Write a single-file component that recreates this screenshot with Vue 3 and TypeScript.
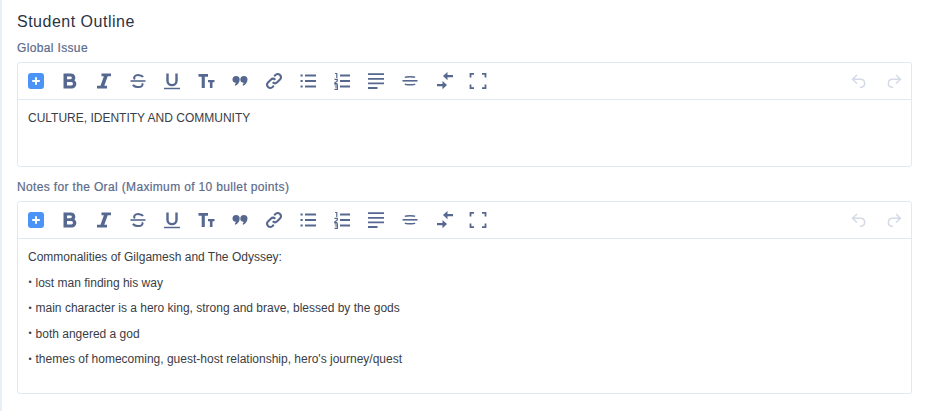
<script setup lang="ts">
interface Shape { d: string; sw?: number; fill?: boolean }
const main: Shape[][] = [
  [{ d: 'M3.500 2.500H11a4.300 4.300 0 0 1 3.500 6.900A4.500 4.500 0 0 1 12 17.500H3.500zM7 5.400v2.900h3.400a1.450 1.450 0 0 0 0-2.900zM7 11v3.600h4.200a1.800 1.800 0 0 0 0-3.600z', fill: true }],
  [{ d: 'M7.500 2.500h9.500v2.800h-3.300L10.300 14.700H13v2.800H3v-2.800h3.500L9.900 5.300H7.500z', fill: true }],
  [{ d: 'M15 6.200C14 3.900 8.500 3.300 6.700 5.300 5.700 6.500 6.200 7.600 7 8.300M5 13.800c1.200 2.500 7.200 3.100 9 1 .7-.8.700-1.800.2-2.600', sw: 2 }, { d: 'M2.500 10h15', sw: 1.600 }],
  [{ d: 'M5.500 2.500V10c0 5.500 9 5.500 9 0V2.500', sw: 2.400 }, { d: 'M2 17.500h16', sw: 1.500 }],
  [{ d: 'M2.500 3h9.500v2.800H8.800V17H5.700V5.800H2.500zM12 9h6.500v2.300h-2V17h-2.600v-5.700H12z', fill: true }],
  [{ d: 'M2.500 8.500a3.600 3.600 0 0 1 7.200 0c0 2.700-1.900 5.300-4.200 6.300l-.8-.9c.8-.8 1.100-1.500 1.100-2.200a3.300 3.300 0 0 1-3.300-3.200zM10.300 8.500a3.600 3.600 0 0 1 7.200 0c0 2.700-1.900 5.300-4.200 6.300l-.8-.9c.8-.8 1.100-1.500 1.100-2.200a3.300 3.300 0 0 1-3.300-3.200z', fill: true }],
  [{ d: 'M8.700 11.300a3.200 3.200 0 0 0 4.500 0l3-3a3.200 3.200 0 0 0-4.500-4.500l-1.500 1.500M11.300 8.700a3.200 3.200 0 0 0-4.500 0l-3 3a3.200 3.200 0 0 0 4.500 4.500l1.500-1.500', sw: 2 }],
  [{ d: 'M7 4.500h11M7 10h11M7 15.500h11', sw: 2 }, { d: 'M2.500 4.500h2.200M2.500 10h2.200M2.500 15.500h2.200', sw: 2 }],
  [{ d: 'M8 4.500h10M8 10h10M8 15.500h10', sw: 1.800 }, { d: 'M3 2.500h1.800V7M2.500 8.300h2.800v1.700L2.700 12v.500h2.800M2.500 13.800h2.900v4.500H2.500M3 16h2.300', sw: 1.200 }],
  [{ d: 'M2 3.200h16M2 7.800h16M2 12.400h16M2 17h9.500', sw: 1.800 }],
  [{ d: 'M2.500 9.800h15', sw: 1.600 }, { d: 'M5 6.500C6 5.500 14 5.500 15 6.500M5 13c1 1 9 1 10 0', sw: 1.600 }],
  [{ d: 'M9 5 13.500 1v3h5.500v2.200h-5.500v3zM13 14 8.500 10v3H3v2.200h5.500v3z', fill: true }],
  [{ d: 'M6 2.800H2.500v3.700M14 2.800h3.500v3.700M6 17.200H2.500v-3.700M14 17.200h3.500v-3.700', sw: 1.800 }],
]
const history: string[] = [
  'M7 3 2.500 7.300 7 11.500M3 7.300h7.500a4 4 0 0 1 1 7.900H10',
  'm11 3 4.500 4.300L11 11.500M15 7.300H7.500a4 4 0 0 0-1 7.900H8',
]
const editors: { label: string; kind: string; lines: { bullet: boolean; text: string }[] }[] = [
  { label: 'Global Issue', kind: 'short', lines: [{ bullet: false, text: 'CULTURE, IDENTITY AND COMMUNITY' }] },
  {
    label: 'Notes for the Oral (Maximum of 10 bullet points)',
    kind: 'tall',
    lines: [
      { bullet: false, text: 'Commonalities of Gilgamesh and The Odyssey:' },
      { bullet: true, text: 'lost man finding his way' },
      { bullet: true, text: 'main character is a hero king, strong and brave, blessed by the gods' },
      { bullet: true, text: 'both angered a god' },
      { bullet: true, text: "themes of homecoming, guest-host relationship, hero's journey/quest" },
    ],
  },
]
</script>

<template>
  <main class="page">
    <h2 class="title">Student Outline</h2>
    <section v-for="ed in editors" :key="ed.label" class="field" :class="ed.kind">
      <label class="label">{{ ed.label }}</label>
      <div class="editor">
        <div class="toolbar">
          <div class="group">
            <span class="btn">
              <svg width="16" height="16" viewBox="0 0 16 16"><rect width="16" height="16" rx="3" fill="#4b93f7" /><path d="M8 4.200v7.600M4.200 8h7.600" stroke="#fff" stroke-width="2" /></svg>
            </span>
            <span v-for="(icon, i) in main" :key="i" class="btn">
              <svg width="20" height="20" viewBox="0 0 20 20">
                <path
                  v-for="(s, j) in icon"
                  :key="j"
                  :d="s.d"
                  :fill="s.fill ? '#56688f' : 'none'"
                  :fill-rule="s.fill ? 'evenodd' : undefined"
                  :stroke="s.fill ? 'none' : '#56688f'"
                  :stroke-width="s.sw"
                />
              </svg>
            </span>
          </div>
          <div class="history">
            <span v-for="d in history" :key="d" class="btn hist">
              <svg width="18" height="18" viewBox="0 0 18 18"><path :d="d" fill="none" stroke="#d4dbe6" stroke-width="1.500" /></svg>
            </span>
          </div>
        </div>
        <div class="content">
          <p v-for="(line, i) in ed.lines" :key="i"><span v-if="line.bullet" class="bullet">•</span><template v-if="line.bullet">&nbsp;</template>{{ line.text }}</p>
        </div>
      </div>
    </section>
  </main>
</template>

<style>
html, body { margin: 0; background: #fff; }
</style>

<style scoped>
.page {
  box-sizing: border-box;
  width: 927px;
  height: 411px;
  overflow: hidden;
  padding: 12px 15px 0 17px;
  background: linear-gradient(to right, #e8eff9 0, #e8eff9 2px, #fff 2px);
  font-family: "Liberation Sans", Arial, sans-serif;
}
.title {
  margin: 0;
  font-size: 16px;
  line-height: 19px;
  font-weight: 400;
  letter-spacing: 0.5px;
  color: #2a3344;
}
.field.short { margin-top: 9px; }
.field.tall { margin-top: 12px; }
.label {
  display: block;
  font-size: 12px;
  line-height: 16px;
  letter-spacing: 0.35px;
  color: #5b6b8c;
  margin-bottom: 6px;
  -webkit-text-stroke: 0.2px #5b6b8c;
}
.editor {
  border: 1px solid #dfe9f4;
  border-radius: 3px;
  background: #fff;
}
.toolbar {
  display: flex;
  justify-content: space-between;
  align-items: center;
  height: 36px;
  padding: 0 0 0 1px;
  border-bottom: 1px solid #dfe9f4;
}
.group, .history { display: flex; align-items: center; }
.btn {
  display: flex;
  align-items: center;
  justify-content: center;
  width: 34px;
  height: 36px;
}
.hist { width: 35px; }
.content {
  box-sizing: border-box;
  font-size: 12px;
  color: #3a3d44;
}
.short .content { height: 66px; padding: 10px 10px 0; }
.tall .content { height: 154px; padding: 9px 10px 0; }
.content p { margin: 0 0 7px; line-height: 18.500px; }
.short .content p { line-height: 16px; }
.bullet {
  display: inline-block;
  width: 4.200px;
  font-size: 9px;
  line-height: 1;
  text-align: center;
  vertical-align: 1.500px;
}
</style>
